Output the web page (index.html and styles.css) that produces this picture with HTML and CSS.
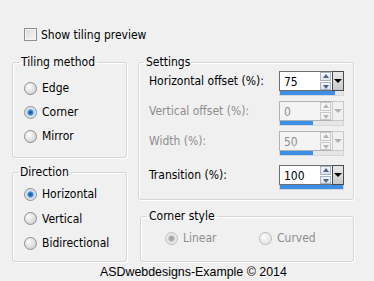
FILE: index.html
```html
<!DOCTYPE html>
<html lang="en">
<head>
    <meta charset="UTF-8">
    <title>Tiling</title>
    <link rel="stylesheet" href="styles.css">
</head>
<body>
    <div class="dialog">
        <label class="check"><span class="box"></span>Show tiling preview</label>

        <div class="columns">
            <div class="left">
                <fieldset class="group tiling">
                    <legend>Tiling method</legend>
                    <div class="inner">
                        <label class="radio"><span class="dot"></span>Edge</label>
                        <label class="radio"><span class="dot on"></span>Corner</label>
                        <label class="radio"><span class="dot"></span>Mirror</label>
                    </div>
                </fieldset>

                <fieldset class="group direction">
                    <legend>Direction</legend>
                    <div class="inner">
                        <label class="radio"><span class="dot on"></span>Horizontal</label>
                        <label class="radio"><span class="dot"></span>Vertical</label>
                        <label class="radio"><span class="dot"></span>Bidirectional</label>
                    </div>
                </fieldset>
            </div>

            <div class="right">
                <fieldset class="group settings">
                    <legend>Settings</legend>
                    <div class="inner">
                        <div class="row">
                            <span class="label">Horizontal offset (%):</span>
                            <div class="spin">
                                <div class="spin-top">
                                    <div class="value">75</div>
                                    <div class="arrows"><span class="up"></span><span class="down"></span></div>
                                    <div class="drop"></div>
                                </div>
                                <div class="bar"><div class="fill" style="width: 88%"></div></div>
                            </div>
                        </div>
                        <div class="row off">
                            <span class="label">Vertical offset (%):</span>
                            <div class="spin">
                                <div class="spin-top">
                                    <div class="value">0</div>
                                    <div class="arrows"><span class="up"></span><span class="down"></span></div>
                                    <div class="drop"></div>
                                </div>
                                <div class="bar"><div class="fill" style="width: 52%"></div></div>
                            </div>
                        </div>
                        <div class="row off">
                            <span class="label">Width (%):</span>
                            <div class="spin">
                                <div class="spin-top">
                                    <div class="value">50</div>
                                    <div class="arrows"><span class="up"></span><span class="down"></span></div>
                                    <div class="drop"></div>
                                </div>
                                <div class="bar"><div class="fill" style="width: 52%"></div></div>
                            </div>
                        </div>
                        <div class="row last">
                            <span class="label">Transition (%):</span>
                            <div class="spin">
                                <div class="spin-top">
                                    <div class="value">100</div>
                                    <div class="arrows"><span class="up"></span><span class="down"></span></div>
                                    <div class="drop"></div>
                                </div>
                                <div class="bar"><div class="fill" style="width: 100%"></div></div>
                            </div>
                        </div>
                    </div>
                </fieldset>

                <fieldset class="group corner">
                    <legend>Corner style</legend>
                    <div class="inner">
                        <label class="radio off"><span class="dot on"></span>Linear</label>
                        <label class="radio off"><span class="dot"></span>Curved</label>
                    </div>
                </fieldset>
            </div>
        </div>

        <div class="footer">ASDwebdesigns-Example © 2014</div>
    </div>
</body>
</html>
```

FILE: styles.css
```css
html, body {
    margin: 0;
    background-color: #f0f0f0;
}
.dialog {
    width: 374px;
    height: 281px;
    overflow: hidden;
    font-family: "DejaVu Sans Condensed", "DejaVu Sans", sans-serif;
    font-stretch: condensed;
    font-size: 12px;
    color: #000;
}
.check {
    display: flex;
    align-items: center;
    height: 13px;
    margin: 28px 0 0 24px;
}
.box {
    width: 11px;
    height: 11px;
    margin-right: 4px;
    border: 1px solid #8e8f8f;
    background: linear-gradient(135deg, #dcdcdc, #f6f6f6);
    box-shadow: inset 0 0 0 1px #f4f4f4;
}
.columns {
    display: flex;
    margin-top: 14px;
    padding-left: 12px;
}
.left {
    width: 115px;
}
.right {
    width: 216px;
    margin-left: 11px;
}
.group {
    margin: 0;
    padding: 0;
    min-width: 0;
    border: 1px solid #d5d5d5;
    border-radius: 3px;
    box-shadow: inset 1px 1px 0 #fff, 1px 1px 0 #fff;
}
.group legend {
    padding: 0 2px;
    margin-left: 5px;
    line-height: 14px;
}
.tiling legend, .corner legend {
    margin-left: 6px;
}
.tiling .inner {
    padding: 7px 0 9px 11px;
}
.direction {
    margin-top: 7px;
}
.direction .inner {
    padding: 3px 0 5px 11px;
}
.direction .radio {
    height: 24.5px;
}
.radio {
    display: flex;
    align-items: center;
    height: 24px;
}
.radio.off {
    color: #8d8d8d;
}
.dot {
    width: 11px;
    height: 11px;
    margin-right: 5px;
    border: 1px solid #8e8f8f;
    border-radius: 50%;
    background: radial-gradient(circle at 35% 35%, #fdfdfd, #d6d6d6 70%);
}
.dot.on {
    background: radial-gradient(circle, #0d4da0 0, #3d8ed9 2.5px, #c8d8ea 3.5px, #eaeaea 6px);
}
.radio.off .dot {
    border-color: #bbb;
    background: radial-gradient(circle at 35% 35%, #fbfbfb, #e6e6e6 70%);
}
.radio.off .dot.on {
    background: radial-gradient(circle, #9e9e9e 0, #b0b0b0 2.5px, #e2e2e2 3.5px, #f0f0f0 6px);
}
.settings .inner {
    padding: 2px 9px 9px 10px;
}
.row {
    display: flex;
    justify-content: space-between;
    align-items: flex-start;
    margin-bottom: 5px;
}
.row.last {
    margin-top: 9px;
    margin-bottom: 0;
}
.label {
    margin-top: 3px;
}
.row.off .label {
    color: #8d8d8d;
}
.spin {
    width: 65px;
}
.spin-top {
    display: flex;
    height: 20px;
}
.value {
    flex: 1;
    padding: 3px 0 0 4px;
    border: 1px solid #6e6e6e;
    border-right: none;
    background-color: #fff;
}
.arrows {
    display: flex;
    flex-direction: column;
    justify-content: center;
    gap: 1px;
    width: 11px;
    padding-right: 1px;
    border-top: 1px solid #6e6e6e;
    border-bottom: 1px solid #6e6e6e;
    background-color: #fff;
}
.up, .down {
    position: relative;
    height: 7px;
    border: 1px solid #a8b4c4;
    background: linear-gradient(#f4f6f9, #dde3ea);
}
.up::after, .down::after {
    content: "";
    position: absolute;
    left: 2px;
    border-left: 3px solid transparent;
    border-right: 3px solid transparent;
}
.up::after {
    top: 1px;
    border-bottom: 4px solid #4b6590;
}
.down::after {
    top: 2px;
    border-top: 4px solid #4b6590;
}
.drop {
    position: relative;
    width: 10px;
    border: 1px solid #4a4a4a;
    background: linear-gradient(#e9e9e9, #c9c9c9);
}
.drop::after {
    content: "";
    position: absolute;
    top: 7px;
    left: 1px;
    border-left: 4px solid transparent;
    border-right: 4px solid transparent;
    border-top: 4px solid #000;
}
.bar {
    height: 4px;
    border: 1px solid #d6d6d6;
    border-top: none;
    background-color: #e6e6e6;
}
.fill {
    height: 100%;
    background-color: #3d8ee6;
}
.row.off .value {
    border-color: #adb2b5;
    background-color: #f4f4f4;
    color: #8d8d8d;
}
.row.off .arrows {
    border-color: #adb2b5;
    background-color: #f4f4f4;
}
.row.off .up, .row.off .down {
    border-color: #c9c9c9;
    background: #f4f4f4;
}
.row.off .up::after {
    border-bottom-color: #b5b5b5;
}
.row.off .down::after {
    border-top-color: #b5b5b5;
}
.row.off .drop {
    border-color: #c9c9c9;
    background: #f0f0f0;
}
.row.off .drop::after {
    border-top-color: #b0b0b0;
}
.corner {
    margin: 9px 0 0 2px;
}
.corner .inner {
    display: flex;
    padding: 3px 0 11px 24px;
}
.corner .radio {
    width: 98px;
}
.footer {
    margin-top: 3px;
    padding-left: 100px;
    font-family: "Liberation Sans", Arial, sans-serif;
    font-stretch: normal;
    font-size: 12.4px;
}
```
